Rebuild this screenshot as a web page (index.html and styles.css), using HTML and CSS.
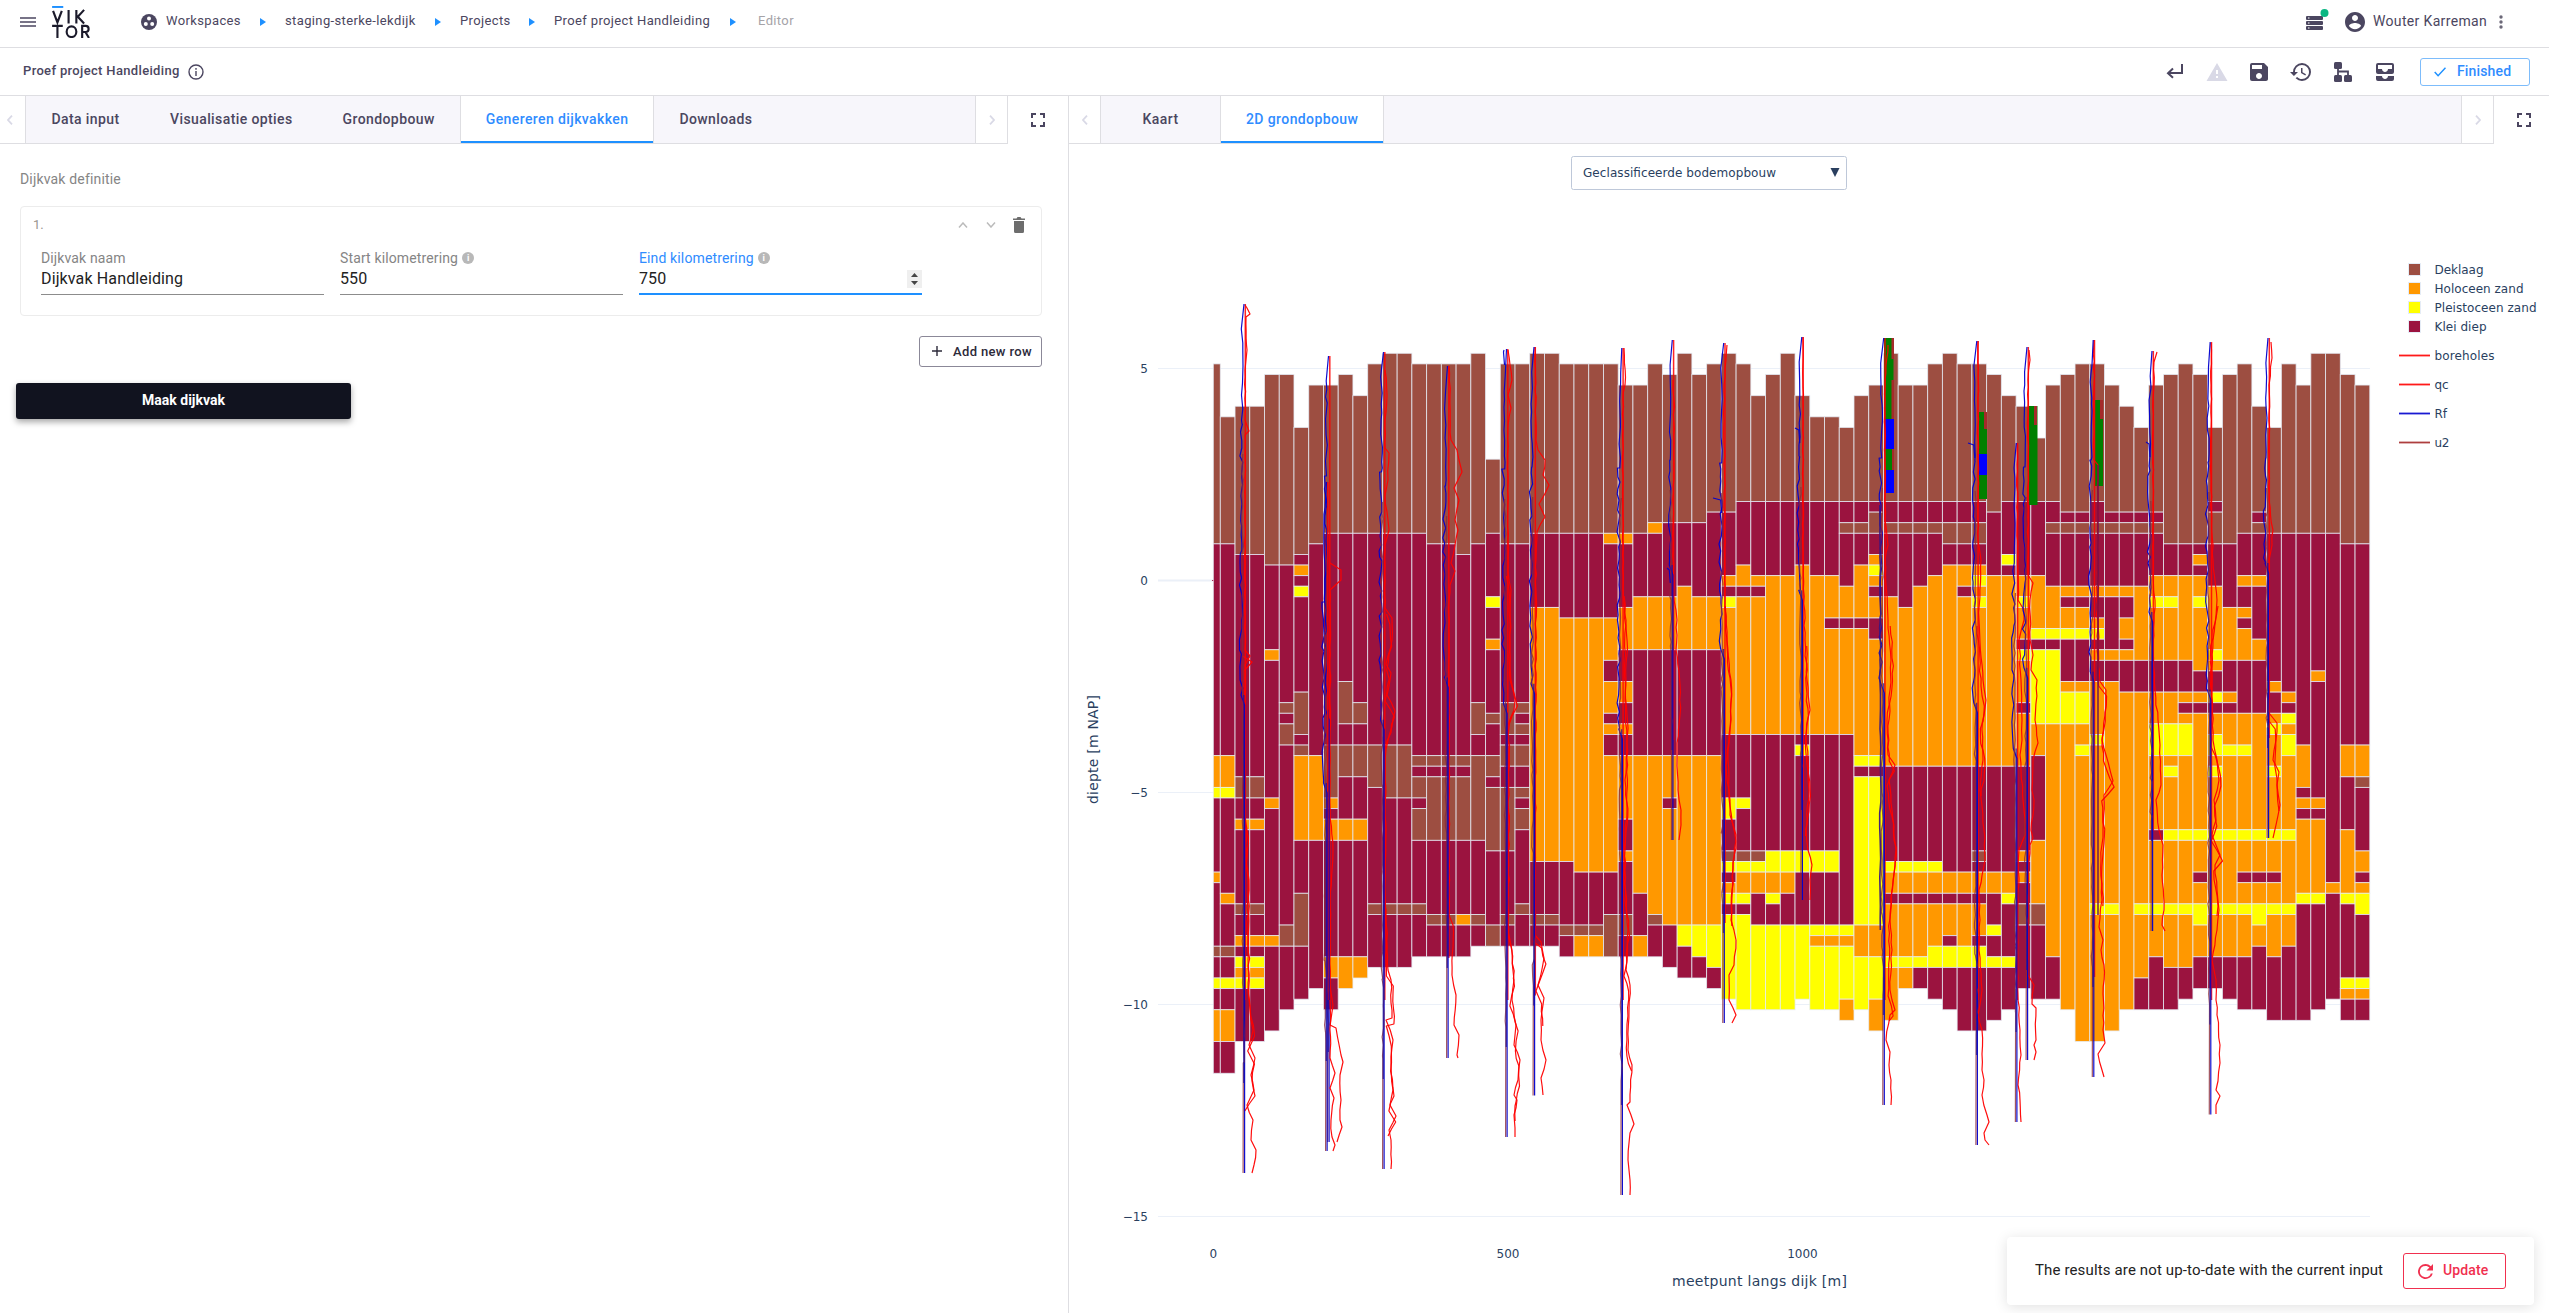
FILE: index.html
```html
<!DOCTYPE html>
<html lang="nl">
<head>
<meta charset="utf-8">
<title>Proef project Handleiding</title>
<link rel="stylesheet" href="styles.css">
</head>
<body>
<header class="topbar">
  <svg class="burger" viewBox="0 0 16 10"><path d="M0 1h16M0 5h16M0 9h16"/></svg>
  <svg class="logo" viewBox="0 0 40 33"><path class="logo-bar" d="M0 1h11.500"/><path d="M1 5l4.500 12L10 5M17 4v14M25 4v14M33 4l-6.500 7L33 18M0 20.500h11M5.500 20.500V33M31 33V20.500h3.500a3 3 0 0 1 0 6.300H31M34.500 27l3.500 6"/><ellipse cx="20" cy="26.500" rx="5" ry="5.500"/></svg>
  <nav class="crumbs">
    <svg class="ws" viewBox="0 0 16 16"><circle cx="8" cy="8" r="8"/><g fill="#fff"><circle cx="8" cy="4.600" r="2"/><circle cx="4.800" cy="10" r="2"/><circle cx="11.200" cy="10" r="2"/></g></svg>
    <span class="c1">Workspaces</span><i></i><span class="c2">staging-sterke-lekdijk</span><i></i><span class="c3">Projects</span><i></i><span class="c4">Proef project Handleiding</span><i></i><span class="c5">Editor</span>
  </nav>
  <div class="account">
    <svg class="jobs" viewBox="0 0 24 24"><g fill="#4b4660"><rect x="0" y="8" width="17" height="4" rx="1"/><rect x="0" y="13" width="17" height="4" rx="1"/><rect x="0" y="18" width="17" height="4" rx="1"/></g><path d="M2 10h1.500M2 15h1.500M2 20h1.500" stroke="#fff"/><circle cx="18.500" cy="5" r="4" fill="#0bb783"/></svg>
    <svg class="avatar" viewBox="2 2 20 20"><path d="M12 2C6.480 2 2 6.480 2 12s4.480 10 10 10 10-4.480 10-10S17.520 2 12 2zm0 3c1.660 0 3 1.340 3 3s-1.340 3-3 3-3-1.340-3-3 1.340-3 3-3zm0 14.200c-2.500 0-4.710-1.280-6-3.220.03-1.990 4-3.080 6-3.080 1.990 0 5.970 1.090 6 3.080-1.290 1.940-3.500 3.220-6 3.220z"/></svg>
    <span class="user">Wouter Karreman</span>
    <svg class="dots" viewBox="0 0 4 14"><circle cx="2" cy="2" r="1.700"/><circle cx="2" cy="7" r="1.700"/><circle cx="2" cy="12" r="1.700"/></svg>
  </div>
</header>

<section class="titlebar">
  <span class="title">Proef project Handleiding</span>
  <svg class="info" viewBox="0 0 16 16"><circle cx="8" cy="8" r="7"/><path d="M8 7v5M8 4v1.700"/></svg>
  <div class="tools">
    <svg viewBox="0 0 24 24"><path d="M19 4v9H6M10 8.500l-5 4.700 5 4.600" fill="none" stroke="#4b4660" stroke-width="2"/></svg>
    <svg class="muted" viewBox="0 0 24 24"><path d="M1.500 21h21L12 3zM13 18h-2v-2h2v2zm0-4h-2v-4h2v4z"/></svg>
    <svg viewBox="0 0 24 24"><path d="M17 3H5a2 2 0 0 0-2 2v14a2 2 0 0 0 2 2h14c1.100 0 2-.9 2-2V7l-4-4zm-5 16c-1.660 0-3-1.340-3-3s1.340-3 3-3 3 1.340 3 3-1.340 3-3 3zm3-10H5V5h10v4z"/></svg>
    <svg viewBox="0 0 24 24"><path d="M13 3a9 9 0 0 0-9 9H1l3.890 3.890.07.14L9 12H6c0-3.870 3.130-7 7-7s7 3.130 7 7-3.130 7-7 7c-1.930 0-3.680-.79-4.940-2.060l-1.420 1.420A8.950 8.950 0 0 0 13 21a9 9 0 0 0 0-18zm-1 5v5l4.280 2.540.72-1.210-3.500-2.080V8H12z"/></svg>
    <svg viewBox="0 0 24 24"><rect x="3" y="2" width="8" height="7" rx="1.500"/><rect x="3" y="15" width="8" height="7" rx="1.500"/><rect x="13" y="15" width="8" height="7" rx="1.500"/><path d="M7 9v7M7 11.500h10V16" fill="none" stroke="#4b4660" stroke-width="1.800"/></svg>
    <svg viewBox="0 0 24 24"><path d="M19 3H5a2 2 0 0 0-2 2v7a2 2 0 0 0 2 2h14a2 2 0 0 0 2-2V5a2 2 0 0 0-2-2zm0 6h-4c0 1.620-1.380 3-3 3s-3-1.380-3-3H5V5h14v4zm-4 7h6v3a2 2 0 0 1-2 2H5a2 2 0 0 1-2-2v-3h6c0 1.660 1.340 3 3 3s3-1.340 3-3z"/></svg>
  </div>
  <div class="finished"><svg viewBox="0 0 12 10"><path d="M.7 5l3.400 3.700L11.500.8"/></svg><span>Finished</span></div>
</section>

<main class="panes">
  <section class="pane left">
    <div class="tabbar">
      <div class="arrow first"><svg viewBox="0 0 6 10"><path d="M5 .7L1 5l4 4.300"/></svg></div>
      <div class="tabs"><div class="tab">Data input</div><div class="tab">Visualisatie opties</div><div class="tab">Grondopbouw</div><div class="tab on">Genereren dijkvakken</div><div class="tab">Downloads</div></div>
      <div class="arrow"><svg viewBox="0 0 6 10"><path d="M1 .7L5 5 1 9.300"/></svg></div>
      <div class="full"><svg viewBox="0 0 14 14"><path d="M1 5V1h4M9 1h4v4M13 9v4H9M5 13H1V9"/></svg></div>
    </div>
    <div class="form">
      <div class="section">Dijkvak definitie</div>
      <div class="card">
        <div class="cardhead"><span>1.</span>
          <svg class="chev" viewBox="0 0 10 6"><path d="M1 5.500L5 1l4 4.500"/></svg>
          <svg class="chev" viewBox="0 0 10 6"><path d="M1 .5L5 5 9 .5"/></svg>
          <svg class="trash" viewBox="0 0 12 16"><path d="M0 1.500h3.500L4.500 0h3l1 1.500H12V3H0zM1 4h10v10.500A1.500 1.500 0 0 1 9.500 16h-7A1.500 1.500 0 0 1 1 14.500z"/></svg>
        </div>
        <div class="fields">
          <div class="field"><label>Dijkvak naam</label><div class="value">Dijkvak Handleiding</div></div>
          <div class="field"><label>Start kilometrering<b>i</b></label><div class="value">550</div></div>
          <div class="field active"><label>Eind kilometrering<b>i</b></label><div class="value">750<svg class="spin" viewBox="0 0 15 18"><rect width="15" height="18" fill="#efefef"/><path d="M4 7l3.500-4L11 7zM4 11l3.500 4L11 11z" fill="#444"/></svg></div></div>
        </div>
      </div>
      <div class="add"><svg viewBox="0 0 10 10"><path d="M5 0v10M0 5h10"/></svg><span>Add new row</span></div>
      <div class="make">Maak dijkvak</div>
    </div>
  </section>
  <section class="pane right">
    <div class="tabbar">
      <div class="arrow"><svg viewBox="0 0 6 10"><path d="M5 .7L1 5l4 4.300"/></svg></div>
      <div class="tabs"><div class="tab">Kaart</div><div class="tab on">2D grondopbouw</div></div>
      <div class="arrow"><svg viewBox="0 0 6 10"><path d="M1 .7L5 5 1 9.300"/></svg></div>
      <div class="full"><svg viewBox="0 0 14 14"><path d="M1 5V1h4M9 1h4v4M13 9v4H9M5 13H1V9"/></svg></div>
    </div>
    <svg class="chart" id="chart" viewBox="1069 144 1480 1169"></svg>
  </section>
</main>

<div class="toast"><span>The results are not up-to-date with the current input</span>
  <div class="update"><svg viewBox="4 4 16 16"><path d="M17.650 6.350A7.960 7.960 0 0 0 12 4a8 8 0 1 0 7.730 10h-2.080A6 6 0 1 1 12 6c1.660 0 3.140.69 4.220 1.780L13 11h7V4l-2.350 2.350z"/></svg><span>Update</span></div>
</div>
<script src="chart.js"></script>
</body>
</html>
```
FILE: styles.css
```css
* { box-sizing: border-box; }
body { margin: 0; width: 2549px; height: 1313px; overflow: hidden; background: #fff; font-family: Roboto, "Liberation Sans", sans-serif; color: #4b4660; display: flex; flex-direction: column; position: relative; }
svg { display: block; flex: none; }
.topbar { height: 48px; flex: none; border-bottom: 1px solid #dedee2; display: flex; align-items: center; padding: 0 46px 4px 20px; font-size: 13px; }
.burger { width: 16px; height: 10px; stroke: #4b4660; stroke-width: 1.6; }
.logo { width: 39px; height: 32px; margin-left: 16px; fill: none; stroke: #1b1a2b; stroke-width: 2.2; }
.logo .logo-bar { stroke: #1e90ff; stroke-width: 2; }
.crumbs { display: flex; align-items: center; margin-left: 50px; letter-spacing: .37px; line-height: 20px; }
.crumbs span { white-space: nowrap; margin-top: -2px; }
.ws { width: 16px; height: 16px; fill: #4b4660; margin-right: 9px; }
.crumbs i { width: 0; height: 0; border: 4px solid transparent; border-left: 6px solid #1e90ff; border-right: 0; margin: 0 19px 0 20px; }
.c1 { width: 74px; } .c2 { width: 130px; } .c3 { width: 49px; } .c4 { width: 156px; } .c5 { color: #a5a3a8; margin-left: 3px; }
.account { margin-left: auto; display: flex; align-items: center; }
.jobs { width: 24px; height: 24px; margin-top: -3px; }
.avatar { width: 20px; height: 20px; fill: #4b4660; margin-left: 15px; }
.user { width: 110px; margin: -2px 16px 0 8px; font-size: 14px; letter-spacing: .34px; white-space: nowrap; }
.dots { width: 4px; height: 14px; fill: #6b6878; }
.titlebar { height: 48px; flex: none; border-bottom: 1px solid #dedee2; display: flex; align-items: center; padding: 0 19px 0 23px; }
.title { font-size: 13px; font-weight: 500; letter-spacing: .34px; width: 157px; white-space: nowrap; margin-top: -2px; }
.info { width: 16px; height: 16px; margin-left: 8px; fill: none; stroke: #4b4660; stroke-width: 1.4; }
.tools { margin-left: auto; display: flex; gap: 18px; }
.tools svg { width: 24px; height: 24px; fill: #4b4660; }
.tools .muted { fill: #d9d9e6; }
.finished { width: 110px; height: 28px; margin-left: 23px; border: 1px solid #7dbcfb; border-radius: 3px; display: flex; align-items: center; padding-left: 13px; font-size: 14px; font-weight: 500; color: #2f8cff; letter-spacing: .15px; }
.finished span { margin-top: -2px; }
.finished svg { width: 12px; height: 10px; fill: none; stroke: #1e90ff; stroke-width: 1.5; margin-right: 11px; }
.panes { display: flex; flex: 1; min-height: 0; }
.left { width: 1069px; border-right: 1px solid #dedee2; }
.right { width: 1480px; }
.tabbar { height: 48px; display: flex; }
.arrow { width: 32px; flex: none; border-bottom: 1px solid #dedee2; border-right: 1px solid #dedee2; display: flex; align-items: center; justify-content: center; }
.arrow.first { width: 26px; padding-right: 6px; }
.arrow svg { width: 6px; height: 10px; fill: none; stroke: #d9d9e6; stroke-width: 1.8; }
.tabs { flex: 1; display: flex; background: #f7f6fb; border-bottom: 1px solid #dedee2; border-right: 1px solid #dedee2; }
.tab { min-width: 119px; padding: 0 25px 2px; display: flex; align-items: center; justify-content: center; font-size: 14px; font-weight: 500; letter-spacing: .4px; white-space: nowrap; }
.tab.on { background: #fff; color: #2f8cff; border: 1px solid #dedee2; border-width: 0 1px; box-shadow: inset 0 -2px #1e90ff; }
.full { width: 60px; flex: none; display: flex; align-items: center; justify-content: center; }
.right .full { width: 55px; padding-left: 5px; }
.full svg { width: 14px; height: 14px; fill: none; stroke: #4b4660; stroke-width: 2; }
.form { padding: 27px 26px 0 16px; }
.section { margin-left: 4px; font-size: 14px; line-height: 16px; color: #858585; letter-spacing: .17px; }
.card { margin: 19px 0 0 4px; height: 110px; border: 1px solid #ececec; border-radius: 4px; }
.cardhead { height: 35px; display: flex; align-items: center; padding: 0 16px 0 12px; font-size: 13px; color: #9a9590; }
.cardhead span { margin-right: auto; }
.chev { width: 10px; height: 6px; fill: none; stroke: #bbb; stroke-width: 1.5; margin-right: 18px; }
.trash { width: 12px; height: 16px; fill: #6d6d6d; }
.chev + .trash { margin-left: -1px; }
.fields { display: flex; gap: 16px; padding: 7px 0 0 20px; }
.field { width: 283px; border-bottom: 1px solid #8c8c8c; height: 46px; }
.field label { display: flex; align-items: center; font-size: 14px; line-height: 18px; color: #858585; letter-spacing: .13px; }
.field b { width: 12px; height: 12px; border-radius: 50%; background: #b8b8b8; color: #fff; font-size: 9px; line-height: 12px; text-align: center; margin-left: 4px; letter-spacing: 0; }
.value { margin-top: 2px; font-size: 16px; line-height: 20px; color: #222; display: flex; justify-content: space-between; align-items: center; letter-spacing: .13px; }
.spin { width: 15px; height: 18px; }
.active { border-bottom: 2px solid #1e90ff; }
.active label { color: #2f8cff; }
.add { width: 123px; height: 31px; margin: 20px 0 0 auto; border: 1px solid #8b8898; border-radius: 3px; display: flex; align-items: center; padding: 0 0 1px 12px; font-size: 13px; font-weight: 500; color: #2c2a3a; letter-spacing: .35px; white-space: nowrap; }
.add svg { width: 10px; height: 10px; stroke: #2c2a3a; stroke-width: 1.4; margin-right: 11px; }
.make { width: 335px; height: 36px; margin-top: 16px; border-radius: 3px; background: #11131f; color: #fff; font-size: 14px; font-weight: 700; line-height: 34px; text-align: center; box-shadow: 0 3px 6px rgba(0,0,0,.35); }
.chart { width: 1480px; height: 1169px; font-family: "DejaVu Sans", sans-serif; font-size: 12px; fill: #2a3f5f; }
.grid { stroke: #ebf0f8; fill: none; }
.bars rect { stroke: #e5ecf6; stroke-width: .9; stroke-opacity: .85; }
.trace { fill: none; stroke-linejoin: round; }
.toast { position: absolute; left: 2007px; top: 1237px; width: 527px; height: 68px; border-radius: 4px; background: #fff; box-shadow: 0 2px 14px rgba(0,0,0,.12); display: flex; align-items: center; padding: 0 28px; font-size: 15px; color: #222; letter-spacing: .14px; white-space: nowrap; justify-content: space-between; }
.toast span { margin-top: -2px; }
.update { width: 103px; height: 36px; border: 1px solid #f0304f; border-radius: 3px; display: flex; align-items: center; padding-left: 14px; font-size: 14px; font-weight: 500; color: #f0304f; }
.update svg { width: 15px; height: 15px; fill: #f0304f; margin-right: 10px; }
```
FILE: chart.js
```js
// Soil columns: first row, then layer code with its last row edge (quarter metres).
const columns = `1 D18 K38 H41 P42 K49 H50 K56 D57 K59 P60 K62 H65 K68
6 D18 K38 H41 P42 K51 H52 K56 D57 K59 P60 K62 H65 K68
5 D19 K40 D42 K44 H45 K52 D53 K55 H56 K57 P58 H59 P60 K65
5 D19 K40 D42 K44 H45 K52 D53 K55 H56 K57 P58 H59 P60 K65
2 D20 K28 H29 K42 H43 K55 H56 K64
2 D20 K33 D34 K35 D37 K54 D56 K62
7 D19 K20 H21 K22 P23 K32 D36 K37 D38 H46 K51 D56 K61
3 D18 K38 H46 K60
3 D17 K37 D42 H43 K44 H46 K57 H59 K62
2 D17 K31 D35 K37 D40 K44 H46 K57 H60
4 D17 K33 D35 K37 D40 K44 H46 K57 H59
1 D17 K37 D41 K52 D53 K58
0 D17 K37 D42 K52 D53 K58
0 D17 K37 D42 K52 D53 K58
1 D17 K38 D39 K40 D42 K43 D46 K52 D53 K57
1 D18 K38 D39 K40 D46 K53 D54 K57
1 D18 K38 D39 K40 D46 K53 D54 K57
1 D19 K38 D39 K40 D46 K53 H54 K57
0 D18 K33 D36 K38 D46 K53 D54 K56
10 D17 K23 P24 K27 H28 K34 D35 K38 D40 K41 D47 K54 D56
1 D18 K33 D36 K37 D39 K41 D47 K53 D54 K56
1 D18 K33 D34 K35 D36 K37 D39 K41 D42 K43 D45 K52 D53 K56
0 D17 K24 H48 K53 D54 K56
0 D17 K24 H48 K53 D54 K56
1 D17 K25 H48 K54 D55 K57
1 D17 K25 H49 K54 D55 H57
1 D17 K25 H49 K54 D55 H57
1 D17 H18 K25 H29 K31 H34 K35 H36 K38 H49 K53 D57
3 D17 H18 K24 H28 K31 H33 K35 H36 K38 H44 K47 H48 K53 D55 K57
3 D17 K23 H28 K38 H51 K55 H57
1 D16 H17 K23 H28 K38 H53 D54 K57
2 D16 K23 H28 K38 H42 K43 H54 K58
0 D16 K22 H28 K38 H54 P56 K59
2 D16 K23 H28 K38 H54 P57 K59
1 D15 K23 H28 K38 H54 P58 K60
0 D15 K21 H22 K23 P24 H36 K42 P44 K47 D48 P49 K50 H51 P52 K53 P61
1 D14 K20 H22 K23 H36 K42 P43 K47 D48 P49 H51 P52 K53 P62
4 D14 K21 H22 K23 H36 K47 D48 P49 H51 K54 P62
2 D14 K21 H36 K47 P49 H51 P52 K54 P62
0 D14 K21 H36 K47 P49 H51 K54 P62
4 D14 K20 H36 K37 P38 K47 P49 K54 P61
6 D14 K21 H36 K47 P49 K54 P55 H56 P62
6 D14 K21 H25 K26 H36 K47 P49 K54 P55 H56 P62
7 D14 K16 D17 K22 H25 K26 H36 K54 P55 H56 P61 H63
4 D14 K16 D17 K20 H25 K26 H38 P39 K40 P54 H57 P62
3 D14 K15 D17 K19 H20 P21 H22 K23 H25 K27 H38 P39 K40 P54 H57 P61 H64
0 D14 K16 D17 K23 H39 K48 P49 H51 K52 H57 P58 H63
3 D14 K16 D17 K24 H39 K48 P49 H51 K52 H57 P58 H60
3 D14 K16 D17 K22 H39 K48 P49 H51 K52 H57 P58 K60
1 D14 K16 D17 K21 H39 K48 P49 H51 K52 H56 P58 K61
0 D14 K16 D18 K20 H39 K49 H51 K52 H55 K56 P58 K62
1 D14 K16 D18 K20 H22 K23 H39 K49 H51 K52 H56 P58 K64
1 D14 K16 D18 K20 H21 P22 H23 P24 H39 K47 D48 K49 H51 K52 H55 K56 P58 K64
2 D15 K21 H39 K49 H51 K54 P55 K57 P58 K63
4 D14 K19 P20 K21 H39 K49 H51 P52 K57 P58 K62
5 D14 K21 H23 P24 H27 K28 P29 H33 K34 H39 K47 H48 K49 H50 K52 D54 K60
8 D14 K21 H26 P27 K28 P35 H38 K46 H52 D54 K61
3 D14 K16 D17 K22 H26 P27 K28 P35 H57 K61
2 D15 K16 D17 K22 H23 K24 H26 P27 K31 H32 P35 H62
1 D15 K16 D17 K22 H23 K24 H26 P27 K31 H32 P35 H37 P38 H65
1 D14 K16 D17 K22 H23 K25 H26 P27 K28 H29 K31 H36 P37 H52 P53 H65
3 D15 K16 D17 K22 H23 K28 H29 K31 H52 P53 H64
5 D15 K16 D17 K22 H23 K25 H27 K28 H29 K32 H62
7 D15 K16 D17 K22 H29 K32 H52 P53 H59 K62
3 D15 K16 D17 K21 H23 P24 H29 K32 H35 P38 H45 K46 H52 P53 H57 K62
2 D18 K21 H23 P24 H29 K32 H35 P38 H39 P40 H45 P46 H52 P53 H58 K62
1 D18 K21 H29 K32 H33 K34 H35 P38 H45 P46 H52 P53 H58 K61
2 D18 K19 H20 K21 H23 P24 H30 K32 H33 K34 H45 P46 H49 K50 H52 P54 H57 K60
7 D14 K15 D18 K22 H28 P29 H30 K32 P33 K34 H36 P38 H39 P40 H45 P46 H52 P53 H57 K60
2 D18 K24 H29 K32 H33 K34 H37 P38 H45 P46 H52 P53 H57 K61
1 D17 K21 H22 K24 H25 K26 H29 K34 H37 P38 H45 P46 H49 K50 H52 P53 H57 K62
5 D15 K16 D17 K21 H22 K27 H29 K34 H45 P46 H49 K50 H52 P54 H56 K62
7 D17 K31 H32 K34 H35 P36 H39 P40 H45 P46 H49 K50 H52 P53 H57 K63
1 D17 K32 H33 K34 P35 H36 P38 H45 P46 H52 P53 H56 K63
3 D17 K37 H41 K42 H43 K44 H51 P52 K63
0 D17 K30 H31 K42 H43 K44 H51 P52 K62
0 D17 K50 H51 K61
2 D18 K37 H40 K45 H51 P52 K59 P60 H61 K63
3 D18 K37 H40 D41 K47 H49 K50 H51 P53 K59 P60 H61 K63`.split("\n");
const fill = { D: "#9d4e41", H: "#ff9800", P: "#ffff00", K: "#9b133f" };

// Soundings: axis x, top, bottom, cone resistance points, end of a twin sounding (0 for none).
const cpts = [
 [1244,304,1173,"1245,305 1247,308 1250,314 1246,317 1246.5,345 1247,350 1245,370 1245,420 1249,431 1245,435 1245,650 1250,656 1245,665 1245,810 1247,830 1246,860 1249,880 1248,900 1247,930 1249,975 1248,990 1250,1010 1253,1030 1249,1045 1255,1058 1251,1075 1254,1090 1247,1105 1253,1120 1251,1140 1256,1150 1254,1165 1252,1173",1108],
 [1328.500,356,1142,"1330,563 1341,570 1341,580 1330,590 1330,810 1333,850 1332,870 1330,900 1330,985 1333,1005 1330,1025 1336,1028 1341,1055 1343,1062 1340,1075 1341,1100 1340,1120 1342,1127 1337,1142",0],
 [1326.500,482,1151,"1330,1000 1330,1058 1335,1073 1330,1088 1334,1098 1331,1120 1332,1137 1335,1145 1333,1151",0],
 [1383.500,352,1169,"1385,370 1387,395 1385,420 1385,448 1389,453 1388,480 1385,495 1388,520 1389,530 1385,545 1385,608 1392,618 1392,640 1388,656 1386,664 1391,673 1387,695 1395,711 1386,750 1385,880 1386,935 1388,970 1391,980 1392,1018 1386,1020 1393,1040 1391,1065 1393,1090 1390,1105 1396,1116 1389,1130 1391,1140 1391,1169",1137],
 [1447.500,366,1058,"1449,366 1451,440 1457,450 1459,460 1462,472 1454,488 1459,500 1455,520 1458,530 1455,545 1451,563 1455,571 1450,585 1449,600 1449,915 1453,925 1452,975 1456,995 1454,1025 1459,1035 1457,1055 1458,1058",0],
 [1506.500,349,1137,"1508,350 1510,365 1512,380 1508,395 1511,408 1508,425 1508,570 1511,590 1510,650 1510,680 1515,700 1514,710 1508,725 1508,930 1512,950 1514,980 1512,1000 1516,1025 1514,1045 1520,1060 1518,1080 1514,1095 1517,1100 1514,1115 1515,1128 1515,1137",1118],
 [1534,347,1095.500,"1535,347 1536,440 1538,450 1545,460 1543,475 1549,485 1539,504 1545,517 1537,532 1536,560 1535,935 1541,942 1544,958 1538,985 1544,998 1541,1020 1541,1040 1546,1060 1541,1078 1543,1095",1040],
 [1621.800,348,1195,"1624,348 1625,385 1623,400 1623,590 1626,620 1627,655 1625,700 1627,745 1625,780 1627,810 1624,850 1625,900 1628,930 1626,970 1630,985 1629,1010 1628,1050 1632,1065 1630,1102 1627,1105 1634,1124 1630,1133 1628,1160 1630,1180 1630,1195",1102],
 [1672.300,340,840,"1673,380 1674,400 1673,550 1674,600 1677,620 1676,650 1680,685 1680,715 1677,750 1678,790 1681,810 1681,825 1679,840",0],
 [1723.700,343,1023,"1727,345 1726,360 1724,385 1725,600 1727,640 1731,680 1731,720 1728,760 1730,800 1730,815 1736,835 1733,870 1731,920 1736,940 1734,965 1729,975 1729,1000 1736,1015 1732,1023",940],
 [1801.800,337,900,"1803,337 1803,560 1805,640 1807,680 1810,710 1806,735 1808,760 1809,790 1806,830 1808,850 1812,865 1810,880 1810,900",840],
 [1883.700,338,1105,"1888,345 1885,380 1885,520 1888,545 1885,560 1888,620 1891,660 1890,690 1887,720 1888,755 1895,765 1889,780 1892,810 1896,850 1892,890 1890,920 1892,950 1890,990 1895,1010 1890,1015 1886,1040 1890,1052 1889,1065 1891,1080 1891,1105",1018],
 [1976.800,341,1145,"1978,341 1978,540 1981,560 1979,620 1983,680 1986,700 1982,730 1983,760 1980,790 1984,830 1985,860 1979,890 1980,920 1979,950 1982,990 1978,1015 1982,1030 1982,1070 1984,1080 1982,1095 1987,1115 1989,1122 1984,1133 1985,1140 1989,1145",819],
 [2016.300,443,1122,"2017,443 2018,600 2024,610 2024,620 2019,640 2021,680 2022,720 2022,740 2020,755 2024,810 2025,835 2019,850 2018,900 2017,970 2020,1030 2021,1055 2018,1085 2020,1100 2021,1122",0],
 [2027,347,1060,"2029,350 2030,360 2028,380 2028,575 2033,583 2030,600 2030,640 2033,655 2031,670 2037,680 2035,720 2038,743 2033,760 2032,790 2034,800 2031,830 2033,838 2030,845 2028,870 2028,975 2034,985 2032,1004 2036,1008 2036,1040 2034,1045 2036,1052 2034,1060",0],
 [2093.200,340,1077,"2094,340 2094,460 2098,465 2098,580 2099,680 2106,690 2105,715 2102,740 2106,755 2113,781 2104,795 2103,830 2101,860 2102,900 2099,927 2103,940 2101,950 2104,965 2103,1030 2105,1043 2098,1054 2102,1070 2104,1077",920],
 [2152,351,931,"2157,352 2154,362 2153,400 2153,575 2155,600 2153,650 2155,690 2158,720 2160,745 2161,785 2156,800 2159,830 2163,845 2162,875 2164,910 2162,925 2165,931",0],
 [2210.200,342,1114.500,"2211,343 2211,490 2213,560 2217,600 2213,640 2212,690 2213,740 2217,760 2219,780 2214,800 2216,820 2212,835 2220,855 2215,865 2217,890 2219,910 2217,930 2212,960 2214,970 2216,980 2216,1000 2220,1045 2220,1063 2216,1090 2220,1096 2216,1105 2216,1114",928],
 [2268,338,838,"2271,342 2272,358 2269,385 2269,500 2273,530 2272,545 2269,560 2269,713 2277,723 2276,740 2273,760 2279,772 2277,785 2280,805 2276,825 2273,838",820]
];
// Sharp friction excursions in the upper clay.
const spikes = { 1723.700: [1713, 498], 1801.800: [1795, 428], 1976.800: [1968, 443], 2152: [2146, 442], 1672.300: [1667, 568], 1506.500: [1504, 350] };

let out = "";
const rect = (x, y, w, h, f) => { out += `<rect x="${x}" y="${y}" width="${w}" height="${h}" fill="${f}"/>`; };
const line = (d, c, w = 1.2, o = 0.95) => { out += `<polyline class="trace" points="${d}" stroke="${c}" stroke-width="${w}" stroke-opacity="${o}"/>`; };
const text = (x, y, s, len, extra = "") => { out += `<text x="${x}" y="${y}" ${len ? `textLength="${len}"` : ""} ${extra}>${s}</text>`; };

[368.500, 792.500, 1004.500, 1216.500].forEach(y => { out += `<path class="grid" d="M1158 ${y}H2370"/>`; });
out += '<path class="grid" stroke-width="2" d="M1158 580.500H2370"/><path d="M1212 580.500h3" stroke="#9b133f"/>';

out += '<g class="bars">';
columns.forEach((c, i) => {
  const x = i ? 1220.300 + 14.737 * (i - 1) : 1213.300;
  const w = i ? 14.737 : 7;
  const p = c.split(" ");
  let r = +p[0];
  p.slice(1).forEach(s => {
    const e = +s.slice(1);
    rect(x.toFixed(2), (353.300 + 10.588 * r).toFixed(2), w, ((e - r) * 10.588).toFixed(2), fill[s[0]]);
    r = e;
  });
});
out += "</g>";

let seed = 7;
const rnd = () => (seed = (seed * 16807) % 2147483647) / 2147483647;
const jitter = (x, y0, y1, amp, step) => {
  const pts = [];
  for (let y = y0; y < y1; y += step * (0.5 + rnd())) pts.push(`${(x + (rnd() - 0.5) * amp).toFixed(1)},${y.toFixed(0)}`);
  pts.push(`${x},${y1}`);
  return pts.join(" ");
};
// Adds small readings between the key points of a sounding.
const roughen = (points, amp) => {
  const res = [];
  points.forEach((q, i) => {
    res.push(q.join(","));
    const n = points[i + 1];
    if (!n) return;
    const steps = Math.floor((n[1] - q[1]) / 7);
    for (let k = 1; k < steps; k++) {
      const t = k / steps;
      res.push(`${(q[0] + (n[0] - q[0]) * t + (rnd() - 0.5) * amp).toFixed(1)},${(q[1] + (n[1] - q[1]) * t).toFixed(1)}`);
    }
  });
  return res.join(" ");
};

[[1884,338,9.500,81,"green"],[1891.500,338,2.500,21,"#a52a2a"],[1891.500,380,2.500,39,"#a52a2a"],[1885,419,9,30,"blue"],[1885,449,7,21,"green"],[1892,449,2,21,"#a52a2a"],[1885,470,9,23,"blue"],
 [1979,412,8,42,"green"],[1984,412,3,17,"#a52a2a"],[1979,454,8,21,"blue"],[1979,475,8,24,"green"],
 [2029,406,8.500,99,"green"],[2034,406,3,19,"#a52a2a"],
 [2095,400,8,86,"green"],[2100,400,3,19,"#a52a2a"]].forEach(b => rect(...b));

cpts.forEach(([x, top, bot, qc, twin]) => {
  const mid = top + (bot - top) * 0.45;
  const p = qc.split(" ").map(s => s.split(",").map(Number));
  line(`${x + 1.300},${top} ${x + 1.300},${Math.min(bot - 100, 1000)}`, "#ff0000", 1.5, 0.85);
  if (twin) {
    const q = p.filter(v => v[1] > 560 && v[1] < twin).map(v => [+(v[0] + (rnd() - 0.5) * 5).toFixed(1), v[1] + 6]);
    line(roughen(q, 2), "#ff0000");
  }
  line(roughen(p, 1.4), "#ff0000");
  line(`${x},${top} ` + jitter(x - 2, top + 25, top + 120, 2, 12) + " " + jitter(x - 3, top + 120, mid, 3.500, 8) + ` ${x + 0.600},${mid + 10} ${x + 0.600},${bot}`, "#0000cd");
  line(jitter(x - 1.500, top + 150, bot - 190, 2, 9) + " " + jitter(x - 0.700, bot - 180, bot - 110, 2.500, 8) + ` ${x - 0.900},${bot}`, "#8b2a3a", 1.2, 0.8);
  line(`${x - 0.200},${mid} ${x - 0.200},${bot - 90}`, "#1a0fa0", 1.4, 0.75);
  const s = spikes[x];
  if (s) line(`${s[0]},${s[1]} ${x - 3},${s[1] + 2} ${x - 2},${s[1] + 15}`, "#0000cd");
});
line(jitter(1880.300, 505, 930, 1.500, 14), "#3a1580", 1.6);
line("2098,465 2098,915", "#6a1050", 1.5);

[[5, 372.500], [0, 585], ["−5", 797], ["−10", 1009], ["−15", 1221]].forEach(([s, y]) => text(1148, y, s, 0, 'text-anchor="end"'));
[[0, 1213.300], [500, 1508], [1000, 1802.500]].forEach(([s, x]) => text(x, 1258, s, 0, 'text-anchor="middle"'));
text(1672, 1286, "meetpunt langs dijk [m]", 175, 'font-size="14"');
text(0, 0, "diepte [m NAP]", 109, 'font-size="14" transform="translate(1098 804) rotate(-90)"');

[["Deklaag", "D", 49], ["Holoceen zand", "H", 89], ["Pleistoceen zand", "P", 102], ["Klei diep", "K", 52]].forEach(([s, k, w], i) => {
  const y = 269.500 + 19 * i;
  out += `<rect x="2408.500" y="${y - 6}" width="12" height="12" fill="${fill[k]}" stroke="#e5ecf6"/>`;
  text(2434.500, y + 4.500, s, w);
});
[["boreholes", "#ff0000", 60], ["qc", "#ff0000", 14], ["Rf", "#0000cd", 12.500], ["u2", "#a52a2a", 15]].forEach(([s, c, w], i) => {
  const y = 355.500 + 29 * i;
  line(`2399,${y} 2430,${y}`, c, 1.8, 0.9);
  text(2434.500, y + 4.500, s, w);
});

out += '<rect x="1571.500" y="156.500" width="275" height="33" rx="2" fill="#fff" stroke="#bec8d9"/><path d="M1830.500 168h9l-4.500 9z"/>';
text(1583, 177, "Geclassificeerde bodemopbouw", 193);
document.getElementById("chart").innerHTML = out;
```
